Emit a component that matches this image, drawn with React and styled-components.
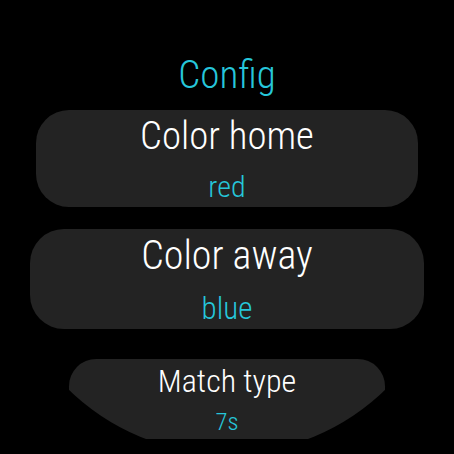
import styled, { createGlobalStyle } from "styled-components";

const GlobalStyle = createGlobalStyle`
  html, body {
    margin: 0;
    padding: 0;
    background: #000000;
  }
`;

const Screen = styled.div`
  width: 454px;
  height: 454px;
  background: #000000;
  clip-path: circle(227px at 227px 227px);
  overflow: hidden;
  display: flex;
  flex-direction: column;
  align-items: center;
  padding-top: 53px;
  box-sizing: border-box;
  font-family: Roboto, "Noto Sans", sans-serif;
  font-stretch: condensed;
`;

const Title = styled.div`
  color: #26c6da;
  font-size: 39px;
  line-height: 44px;
  font-weight: 300;
`;

const Chip = styled.div`
  flex-shrink: 0;
  box-sizing: border-box;
  width: ${(props) => 394 * props.scale}px;
  height: ${(props) => 100 * props.scale}px;
  margin-top: ${(props) => props.space}px;
  padding-top: ${(props) => 7.3 * props.scale}px;
  border-radius: ${(props) => 34 * props.scale}px;
  background: #232323;
  display: flex;
  flex-direction: column;
  align-items: center;
`;

const Label = styled.div`
  color: #ffffff;
  font-size: ${(props) => 40 * props.scale}px;
  line-height: 1;
  font-weight: 300;
`;

const Value = styled.div`
  color: #26c6da;
  font-size: ${(props) => 31 * props.scale}px;
  line-height: 1;
  font-weight: 300;
  margin-top: ${(props) => 16.8 * props.scale}px;
`;

const items = [
  { label: "Color home", value: "red", scale: 0.97, space: 13 },
  { label: "Color away", value: "blue", scale: 1, space: 22 },
  { label: "Match type", value: "7s", scale: 0.8, space: 30 },
];

export default function App() {
  return (
    <>
      <GlobalStyle />
      <Screen>
        <Title>Config</Title>
        {items.map((item) => (
          <Chip key={item.label} scale={item.scale} space={item.space}>
            <Label scale={item.scale}>{item.label}</Label>
            <Value scale={item.scale}>{item.value}</Value>
          </Chip>
        ))}
      </Screen>
    </>
  );
}
